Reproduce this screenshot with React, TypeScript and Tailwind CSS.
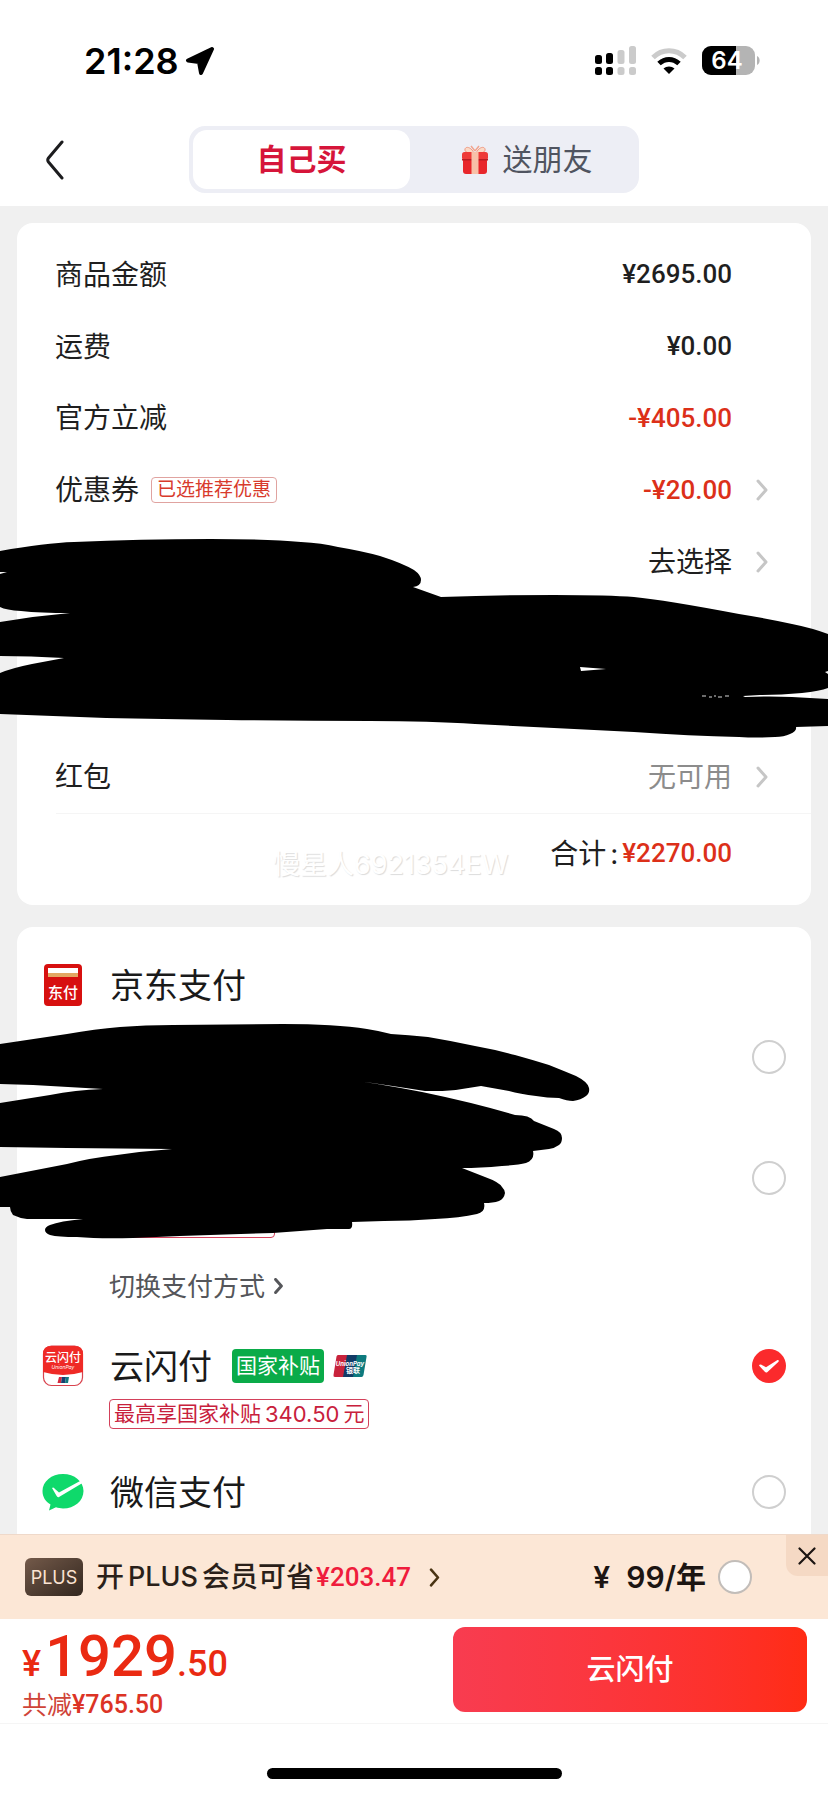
import * as React from "react";
import clsx from "clsx";

type AmountRow = {
  label: string;
  value: string;
  tone?: "dark" | "red" | "muted";
  tag?: string;
  link?: boolean;
};

const AMOUNT_ROWS: AmountRow[] = [
  { label: "商品金额", value: "¥2695.00" },
  { label: "运费", value: "¥0.00" },
  { label: "官方立减", value: "-¥405.00", tone: "red" },
  { label: "优惠券", value: "-¥20.00", tone: "red", tag: "已选推荐优惠", link: true },
  { label: "", value: "去选择", link: true },
  { label: "", value: "" },
  { label: "", value: "" },
  { label: "红包", value: "无可用", tone: "muted", link: true },
];

function Chevron({ className, strokeWidth = 3 }: { className?: string; strokeWidth?: number }) {
  return (
    <svg viewBox="0 0 12 22" fill="none" stroke="currentColor" strokeWidth={strokeWidth} className={className}>
      <path d="M2 2 L10 11 L2 20" strokeLinecap="round" strokeLinejoin="round" />
    </svg>
  );
}

function StatusBar() {
  return (
    <div className="flex h-[122px] items-center justify-between pr-[68px] pl-[84px]">
      <div className="flex items-center gap-[6px]">
        <span className="text-[36px] leading-none font-semibold text-black">21:28</span>
        <svg viewBox="0 0 30 28" className="h-7 w-[30px]">
          <path d="M27 2 L3 13.500 L14 15 L16 26 Z" stroke="#000" strokeWidth="4" strokeLinejoin="round" />
        </svg>
      </div>
      <div className="flex items-center gap-[15px]">
        <svg viewBox="0 0 41 30" className="h-[30px] w-[41px]">
          <rect x="0" y="9" width="7" height="9" rx="2.500" />
          <rect x="11" y="7" width="7" height="11" rx="2.500" />
          <rect x="22.500" y="4" width="7" height="14" rx="2.500" fill="#cbcbcb" />
          <rect x="34" y="0" width="7" height="18" rx="2.500" fill="#cbcbcb" />
          <rect x="0" y="21" width="7" height="8" rx="2.500" />
          <rect x="11" y="21" width="7" height="8" rx="2.500" />
          <rect x="22.500" y="21" width="7" height="8" rx="2.500" fill="#cbcbcb" />
          <rect x="34" y="21" width="7" height="8" rx="2.500" fill="#cbcbcb" />
        </svg>
        <svg viewBox="0 0 36 28" className="h-7 w-9" fill="none" strokeWidth="5">
          <path d="M2 10.500 C11 1.500 25 1.500 34 10.500" stroke="#cbcbcb" />
          <path d="M8 16.500 C14 11 22 11 28 16.500" stroke="#000" />
          <path d="M18 27 L12.500 21.500 C15.500 18.700 20.500 18.700 23.500 21.500 Z" fill="#000" />
        </svg>
        <svg viewBox="0 0 58 30" className="h-[30px] w-[58px]">
          <clipPath id="cell">
            <rect x="0" y="0" width="53" height="29" rx="9" />
          </clipPath>
          <g clipPath="url(#cell)">
            <rect width="53" height="29" fill="#b4b4b4" />
            <rect width="34" height="29" fill="#000" />
          </g>
          <path d="M55 10 C58.500 11 58.500 18 55 19 Z" fill="#b4b4b4" />
          <text x="25" y="23" textAnchor="middle" fontSize="24" fontWeight="600" fill="#fff">
            64
          </text>
        </svg>
      </div>
    </div>
  );
}

function GiftIcon() {
  return (
    <svg viewBox="0 0 28 30" className="h-[30px] w-7">
      <path d="M13 8 C8 9 3 7 4 4 C5 1 10 2 13 8 Z" fill="#fbd9c6" stroke="#ee9a84" />
      <path d="M15 8 C20 9 25 7 24 4 C23 1 18 2 15 8 Z" fill="#fbd9c6" stroke="#ee9a84" />
      <path d="M14 6 L10 1 M14 6 L18 1" stroke="#f2a48e" strokeWidth="1.500" />
      <rect x="2" y="13" width="24" height="16" rx="3" fill="#e8262b" />
      <rect x="1" y="7" width="26" height="8" rx="2.500" fill="#ee3a38" />
      <rect x="1" y="14" width="26" height="1.500" fill="#b91c22" />
      <rect x="10.500" y="7" width="7" height="22" fill="#f8c0a8" />
    </svg>
  );
}

function Header() {
  return (
    <header className="grid h-[84px] grid-cols-[1fr_450px_1fr] items-start pt-1">
      <button type="button" aria-label="返回" className="flex h-[67px] items-center pl-[45px]">
        <svg viewBox="0 0 20 40" className="h-10 w-5" fill="none" stroke="#1c1c1e" strokeWidth="3">
          <path d="M17 2 L3.500 18 Q2 20 3.500 22 L17 38" strokeLinecap="round" />
        </svg>
      </button>
      <div className="flex h-[67px] rounded-2xl bg-[#edeef5] p-1">
        <button type="button" className="w-[217px] rounded-[14px] bg-white text-[30px] font-bold text-[#d6153a]">
          自己买
        </button>
        <button
          type="button"
          className="flex flex-1 items-center justify-center gap-[14px] pl-2 text-[30px] text-[#505460]"
        >
          <GiftIcon />
          送朋友
        </button>
      </div>
    </header>
  );
}

function AmountLine({ row }: { row: AmountRow }) {
  const body = (
    <>
      <span>{row.label}</span>
      {row.tag && (
        <span className="ml-3 flex h-[26px] items-center rounded border border-[#e0a3a0] px-[5px] text-[19px] text-[#d83a2c]">
          {row.tag}
        </span>
      )}
      <span
        className={clsx(
          "ml-auto",
          row.value.includes("¥") && "font-['Roboto'] text-[26px] font-medium",
          row.tone === "red" && "text-[#dc3019]",
          row.tone === "muted" && "text-[#8c8c8c]",
        )}
      >
        {row.value}
      </span>
      <span className="flex w-9 justify-end">
        {row.link && <Chevron className="h-[22px] w-3 text-[#c6c6c6]" />}
      </span>
    </>
  );
  const layout = "flex w-full items-center pr-[43px] pl-[38px] text-left text-[28px] text-[#1f1f1f]";
  return row.link ? (
    <button type="button" className={layout}>
      {body}
    </button>
  ) : (
    <div className={layout}>{body}</div>
  );
}

function UpperScribble() {
  return (
    <svg
      viewBox="0 530 828 215"
      preserveAspectRatio="none"
      className="pointer-events-none absolute inset-x-0 top-[307px] h-[215px] w-full"
    >
      <path
        fillRule="evenodd"
        d="M0 551 Q45 543 74 542 Q140 539 211 539 Q270 539 301 542 Q322 543 338 547 Q362 551 380 556 Q402 563 414 570 Q421 575 421 580 Q421 586 413 587 L441 597 Q500 595 554 595 Q610 595 634 597 Q665 600 739 614 Q770 619 792 624 Q812 628 828 634 L828 671 L825 672 L828 674 L828 688 Q820 691 802 693 Q780 695 760 695 L743 696 L745 697 Q770 696 792 697 L828 699 L828 726 L796 727 Q797 731 790 734 Q784 737 775 737 Q757 738 739 737 Q690 736 634 732 L554 728 L475 724 Q430 721 370 721 Q300 721 227 720 Q160 719 106 718 L0 714 L0 673 Q12 668 32 664 L64 658 Q30 656 0 656 L0 622 Q35 616 70 613 Q40 613 21 611 Q6 610 0 607 L0 574 L7 572 L0 572 Z M580 667 L606 669 L581 671 Z"
      />
      <path d="M702 696 h4 M709 697 h3 M714 696 h2 M718 697 h4 M725 696 h4" stroke="#d5d5d5" strokeWidth="1.200" />
    </svg>
  );
}

function LowerScribble() {
  return (
    <svg
      viewBox="0 1020 828 225"
      preserveAspectRatio="none"
      className="pointer-events-none absolute inset-x-0 top-[93px] h-[225px] w-full"
    >
      <path d="M0 1044 L67 1034 Q95 1029 120 1027 Q145 1025 173 1025 L283 1024 Q335 1024 367 1029 Q380 1031 391 1034 Q408 1035 428 1037 Q452 1041 475 1046 Q497 1050 515 1055 Q533 1060 549 1065 Q564 1071 576 1076 Q588 1082 589 1088 Q590 1093 586 1096 Q581 1100 573 1101 Q567 1101 559 1098 Q547 1098 536 1096 Q520 1094 509 1091 L481 1086 L462 1089 Q450 1091 435 1091 L425 1091 Q380 1084 344 1079 Q375 1083 422 1092 Q475 1103 515 1115 Q530 1115 534 1121 L554 1129 Q562 1132 562 1138 Q562 1143 559 1145 Q555 1148 549 1149 L533 1151 Q535 1160 526 1163 Q518 1165 502 1166 Q480 1168 462 1168 L485 1177 Q499 1182 502 1187 Q505 1190 505 1193 Q504 1199 499 1201 Q493 1203 484 1203 Q486 1212 477 1214 Q460 1218 435 1219 Q410 1221 384 1221 L352 1222 Q353 1229 349 1229 L327 1229 Q300 1231 273 1233 L180 1236 L133 1238 Q100 1239 77 1237 Q58 1237 50 1235 Q45 1233 45 1230 Q45 1227 50 1225 Q60 1221 83 1219 L27 1219 Q19 1218 13 1215 Q10 1211 10 1207 L0 1207 L0 1177 L67 1164 Q90 1158 117 1155 Q145 1151 172 1149 L67 1148 L0 1147 L0 1103 L50 1095 Q75 1090 103 1089 L33 1085 L0 1084 Z" />
    </svg>
  );
}

function AmountCard() {
  return (
    <section className="relative px-[17px]">
      <div className="rounded-2xl bg-white pt-4 pb-3">
        <div className="grid min-h-[574px] auto-rows-fr">
          {AMOUNT_ROWS.map((row, i) => (
            <AmountLine key={i} row={row} />
          ))}
        </div>
        <div className="ml-[39px] flex h-20 items-center justify-end border-t border-[#f5f5f5] pr-[79px]">
          <span className="text-[28px] text-[#1f1f1f]">
            合计<span className="mx-1">:</span>
          </span>
          <span className="font-['Roboto'] text-[26px] font-medium text-[#dc3019]">¥2270.00</span>
        </div>
      </div>
      <UpperScribble />
      <span className="absolute bottom-5 left-[273px] text-[27px] leading-10 text-white [text-shadow:1px_1px_1px_#dcdcdc]">
        慢星人6921354EW
      </span>
    </section>
  );
}

function JdPayIcon() {
  return (
    <svg viewBox="0 0 42 42" className="size-[42px]">
      <rect x="2" y="0" width="38" height="42" rx="4" fill="#d7100f" />
      <rect x="6" y="4" width="30" height="9" fill="#e3a763" />
      <rect x="6" y="4" width="30" height="5" fill="#fff" />
      <text x="21" y="34" textAnchor="middle" fontSize="15" fontWeight="500" fill="#fff">
        东付
      </text>
    </svg>
  );
}

function QuickPassIcon() {
  return (
    <svg viewBox="0 0 42 42" className="size-[42px]">
      <rect x="1.500" y="1" width="39" height="39.500" rx="8" fill="#fff" stroke="#d9434e" strokeWidth="1.200" />
      <path d="M1 9 Q1 1 9 1 H33 Q41 1 41 9 V27 Q21 33 1 27 Z" fill="#ef2a26" />
      <text x="21" y="17" textAnchor="middle" fontSize="12" fontWeight="500" fill="#fff">
        云闪付
      </text>
      <text x="21" y="24" textAnchor="middle" fontSize="5" fontStyle="italic" fill="#fff">
        UnionPay
      </text>
      <path d="M17 32 H20 L19 38 H15.500 Z" fill="#d42a3f" />
      <path d="M20 32 H24 L23 38 H19 Z" fill="#17406f" />
      <path d="M24 32 H27 L26 38 H23 Z" fill="#127a80" />
    </svg>
  );
}

function WechatIcon() {
  return (
    <svg viewBox="0 0 42 38" className="h-[38px] w-[42px]">
      <path
        d="M21 1 C9.500 1 0.500 8.500 0.500 18 C0.500 24 3.500 28.500 8.500 31.500 L7 37.500 L14 34.300 C16 35 18.500 35.500 21 35.500 C32.500 35.500 41.500 28 41.500 18 C41.500 8.500 32.500 1 21 1 Z"
        fill="#0fd96b"
      />
      <path d="M10 15 Q11.500 13.500 13 16 L17 19.500 L39 7.500 L40.500 10 L17 24 Q15.500 24.800 14.500 22.800 Z" fill="#fff" />
    </svg>
  );
}

function UnionPayLogo() {
  return (
    <svg viewBox="0 0 34 22" className="h-[22px] w-[34px]">
      <path d="M5 0 H15 L11 22 H2 Q0 22 0.500 20 L3.500 1.500 Q3.800 0 5 0 Z" fill="#c8233c" />
      <path d="M14 0 H25 L21 22 H10 Z" fill="#123b66" />
      <path d="M24 0 H32.500 Q34 0 33.600 1.500 L30.500 20 Q30 22 28.500 22 H20 Z" fill="#0d7a7e" />
      <text x="17" y="10.500" textAnchor="middle" fontSize="6" fontWeight="700" fontStyle="italic" fill="#fff">
        UnionPay
      </text>
      <text x="20" y="18" textAnchor="middle" fontSize="7" fontWeight="700" fill="#fff">
        银联
      </text>
    </svg>
  );
}

function PayRadio({ value, selected, onSelect, label }: {
  value: string;
  selected: string;
  onSelect: (v: string) => void;
  label?: string;
}) {
  return (
    <span className="relative ml-auto flex size-[34px] shrink-0">
      <input
        type="radio"
        name="pay"
        aria-label={label}
        value={value}
        checked={selected === value}
        onChange={() => onSelect(value)}
        className="size-[34px] appearance-none rounded-full border-2 border-[#cfcfcf] bg-white checked:border-0 checked:bg-[#fb2a2c]"
      />
      {selected === value && (
        <svg viewBox="0 0 34 34" className="pointer-events-none absolute inset-0">
          <path d="M7 16.500 Q7.500 15 9.500 15.800 L14 18.300 L25.500 11 Q27.500 10.800 26.500 12.800 L15.500 23 Q14 24.200 12.800 22.800 Z" fill="#fff" />
        </svg>
      )}
    </span>
  );
}

function PaymentCard() {
  const [selected, setSelected] = React.useState("quickpass");

  return (
    <section className="relative px-[17px]">
      <div className="rounded-t-2xl bg-white px-[25px] pt-[27px] pb-[21px]">
        <div className="flex h-[62px] items-center gap-[26px]">
          <JdPayIcon />
          <span className="text-[34px] text-[#1a1a1a]">京东支付</span>
        </div>
        <div className="flex h-[82px] items-center">
          <PayRadio value="card-1" label="银行卡一" selected={selected} onSelect={setSelected} />
        </div>
        <div className="flex h-40 items-center pl-[67px]">
          <span className="mb-5 h-[30px] w-[166px] self-end rounded border border-[#d3405a]" />
          <PayRadio value="card-2" label="银行卡二" selected={selected} onSelect={setSelected} />
        </div>
        <button type="button" className="flex h-14 items-center gap-[9px] pl-[67px] text-[26px] text-[#55565a]">
          切换支付方式
          <Chevron className="h-4 w-[9px]" strokeWidth={4} />
        </button>
        <label className="mt-[31px] flex h-[42px] items-center">
          <QuickPassIcon />
          <span className="ml-[26px] text-[34px] text-[#1a1a1a]">云闪付</span>
          <span className="ml-5 flex h-[34px] items-center rounded bg-[#0aab49] px-1 text-[21px] text-white">
            国家补贴
          </span>
          <span className="ml-[9px]">
            <UnionPayLogo />
          </span>
          <PayRadio value="quickpass" selected={selected} onSelect={setSelected} />
        </label>
        <div className="mt-3 ml-[67px] flex h-[30px] w-fit items-center gap-1 rounded border border-[#d3405a] px-1 text-[21px] text-[#c8203c]">
          <span>最高享国家补贴</span>
          <span className="text-[22px]">340.50</span>
          <span>元</span>
        </div>
        <label className="mt-[42px] flex h-[42px] items-center">
          <WechatIcon />
          <span className="ml-[26px] text-[34px] text-[#1a1a1a]">微信支付</span>
          <PayRadio value="wechat" selected={selected} onSelect={setSelected} />
        </label>
      </div>
      <LowerScribble />
    </section>
  );
}

function PlusBanner() {
  return (
    <div className="relative flex h-[85px] items-center border-t border-[#efd9ca] bg-[#fce7d6] pr-[76px] pl-[25px]">
      <span className="flex h-[38px] w-[58px] items-center justify-center rounded-md bg-linear-to-br from-[#745a4a] to-[#33271f] text-[18px] text-[#fbe3d2]">
        PLUS
      </span>
      <button type="button" className="ml-[13px] flex items-center text-[28px] font-medium text-[#2a1f19]">
        <span>开</span>
        <span className="mx-1 text-[27px]">PLUS</span>
        <span>会员可省</span>
        <span className="ml-[2px] font-['Roboto'] text-[26px] text-[#ef1c3c]">¥203.47</span>
        <Chevron className="ml-[18px] h-[19px] w-[11px] text-[#4a3413]" />
      </button>
      <label className="ml-auto flex items-center text-[30px] font-semibold text-[#1c1512]">
        <span className="mr-4">¥</span>
        99/年
        <input
          type="checkbox"
          className="ml-3 size-[34px] appearance-none rounded-full border-2 border-[#c2bdb9] bg-white"
        />
      </label>
      <button
        type="button"
        aria-label="关闭"
        className="absolute top-0 right-0 flex h-[41px] w-[42px] items-center justify-center rounded-bl-xl bg-[#f5d9c4]"
      >
        <svg viewBox="0 0 18 18" className="size-[18px]" stroke="#1c1512" strokeWidth="2.200" strokeLinecap="round">
          <path d="M1.500 1.500 L16.500 16.500 M16.500 1.500 L1.500 16.500" />
        </svg>
      </button>
    </div>
  );
}

function CheckoutBar() {
  return (
    <div className="flex h-[105px] items-start border-b border-[#f5f5f5] pt-2 pr-[21px] pl-[22px]">
      <div className="flex flex-1 flex-col">
        <p className="font-['Roboto'] text-[36px] leading-[58px] font-medium text-[#ea2a12]">
          ¥<span className="ml-1 text-[58px]">1929</span>.50
        </p>
        <p className="flex items-center text-[25px] leading-6 text-[#cf4438]">
          共减<span className="font-['Roboto'] font-medium text-[#dc3325]">¥765.50</span>
        </p>
      </div>
      <button
        type="button"
        className="h-[85px] w-[354px] rounded-xl bg-linear-to-r from-[#f83c50] to-[#ff2c14] text-[29px] font-medium text-white"
      >
        云闪付
      </button>
    </div>
  );
}

export default function App() {
  return (
    <div className="min-h-screen overflow-x-hidden bg-white font-['Inter','Noto_Sans_CJK_SC',sans-serif]">
      <StatusBar />
      <Header />
      <main className="flex flex-col gap-[22px] bg-[#f0f0f0] pt-[17px]">
        <AmountCard />
        <PaymentCard />
      </main>
      <footer>
        <PlusBanner />
        <CheckoutBar />
        <div className="flex h-[72px] justify-center pt-11">
          <div className="h-[11px] w-[295px] rounded-full bg-black" />
        </div>
      </footer>
    </div>
  );
}
